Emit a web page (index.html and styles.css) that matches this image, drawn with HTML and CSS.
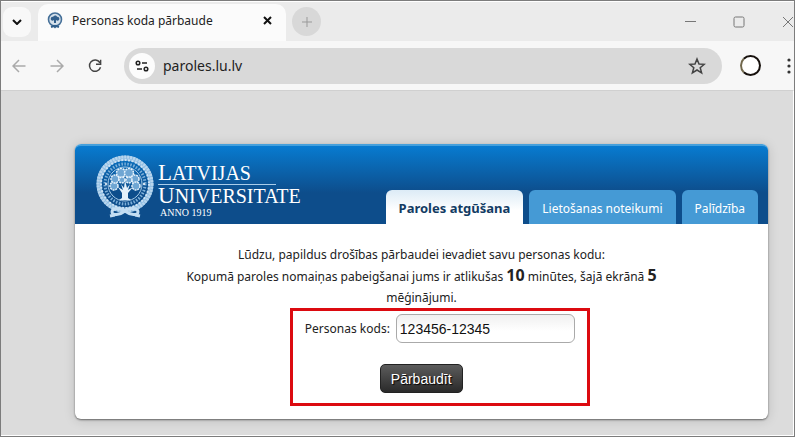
FILE: index.html
```html
<!DOCTYPE html>
<html lang="lv">
  <head>
    <meta charset="UTF-8" />
    <meta name="viewport" content="width=device-width, initial-scale=1.0" />
    <title>Personas koda pārbaude</title>
    <link rel="stylesheet" href="styles.css">
  </head>
  <body>
    <div class="window">
      <!-- Tab strip -->
      <div class="tab-strip">
        <button class="tab-search" aria-label="Tabs">
          <svg width="10" height="6" viewBox="0 0 10 6"><path d="M1 1l4 4 4-4" /></svg>
        </button>
        <div class="browser-tab">
          <svg class="favicon" width="16" height="17" viewBox="0 0 16 17">
            <circle cx="8" cy="7.5" r="6.5" fill="#d5e0ea" stroke="#446f98" stroke-width="1.6" />
            <path d="M4 8c-1-2 1-4 2-3 1-2 4-2 4 0 2-1 3 2 2 3-1 1-2 1-3 0v3H7V8C6 9 5 9 4 8z" fill="#315f8c" />
            <path d="M4 15l3-1 1 1 1-1 3 1" fill="none" stroke="#315f8c" stroke-width="2" />
          </svg>
          <span class="tab-title">Personas koda pārbaude</span>
          <button class="tab-close" aria-label="Close tab">
            <svg width="9" height="9" viewBox="0 0 9 9"><path d="M1 1l7 7M8 1l-7 7" /></svg>
          </button>
        </div>
        <button class="new-tab" aria-label="New tab">
          <svg width="12" height="12" viewBox="0 0 12 12"><path d="M6 1v10M1 6h10" /></svg>
        </button>
        <div class="window-buttons">
          <button aria-label="Minimize"><svg width="12" height="12" viewBox="0 0 12 12"><path d="M1 5.500h11" /></svg></button>
          <button aria-label="Maximize"><svg width="12" height="12" viewBox="0 0 12 12"><rect x="1" y="1" width="10" height="10" rx="1.500" /></svg></button>
          <button aria-label="Close"><svg width="12" height="12" viewBox="0 0 12 12"><path d="M1 1l10 10M11 1L1 11" /></svg></button>
        </div>
      </div>

      <!-- Toolbar -->
      <div class="toolbar">
        <button class="nav-button" aria-label="Back">
          <svg width="14" height="14" viewBox="0 0 14 14"><path d="M13.500 7H1.500M7 1L1 7l6 6" /></svg>
        </button>
        <button class="nav-button" aria-label="Forward">
          <svg width="14" height="14" viewBox="0 0 14 14"><path d="M.5 7h12M7 1l6 6-6 6" /></svg>
        </button>
        <button class="nav-button reload" aria-label="Reload">
          <svg width="14" height="14" viewBox="0 0 14 14"><path d="M11.800 3.600A5.600 5.600 0 1 0 12.500 8.200M12.600.8v4.500H8" /></svg>
        </button>
        <div class="address-bar">
          <button class="site-info" aria-label="Site information">
            <svg width="14" height="12" viewBox="0 0 14 12">
              <circle cx="3" cy="3" r="1.800" /><path d="M7 3h5" />
              <circle cx="11" cy="9" r="1.800" /><path d="M2 9h5" />
            </svg>
          </button>
          <input class="url" type="text" value="paroles.lu.lv" aria-label="Address">
          <button class="star" aria-label="Bookmark">
            <svg width="18" height="18" viewBox="0 0 18 18"><path d="M9 2l2 5 5.300.3-4.100 3.400 1.400 5.200L9 13l-4.600 2.900 1.400-5.200L1.700 7.300 7 7z" /></svg>
          </button>
        </div>
        <button class="profile" aria-label="Profile"></button>
        <button class="menu" aria-label="Menu">
          <svg width="4" height="16" viewBox="0 0 4 16"><circle cx="2" cy="2" r="1.600" /><circle cx="2" cy="8" r="1.600" /><circle cx="2" cy="14" r="1.600" /></svg>
        </button>
      </div>

      <!-- Page -->
      <main class="page">
        <div class="card">
          <header class="header">
            <div class="logo">
              <svg class="emblem" width="60" height="66" viewBox="0 0 60 66">
                <circle cx="30" cy="30" r="26" fill="none" stroke="#8fbde2" stroke-width="5" />
                <circle cx="30" cy="30" r="27" fill="none" stroke="#b9d6ee" stroke-width="3" stroke-dasharray="2 1" />
                <circle cx="30" cy="30" r="24" fill="none" stroke="#cfe3f4" stroke-width="2" stroke-dasharray="2 1.500" />
                <circle cx="30" cy="30" r="20" fill="none" stroke="#7fb0d9" stroke-width="3" stroke-dasharray="1.500 1.500" />
                <circle cx="30" cy="30" r="17" fill="none" stroke="#a9cce8" stroke-width="1" />
                <g fill="#6fa6d3" stroke="#e6f2fb" stroke-width="1.500" stroke-dasharray="2 .8">
                  <circle cx="19" cy="32" r="4" /><circle cx="20" cy="25" r="4" />
                  <circle cx="26" cy="19" r="4.500" /><circle cx="34" cy="19" r="4.500" />
                  <circle cx="40" cy="25" r="4" /><circle cx="41" cy="32" r="4" />
                  <circle cx="27" cy="26" r="3" /><circle cx="34" cy="26" r="3" />
                </g>
                <path d="M23 33l5 3-2-6 3 4 1-8 2 8 3-4-2 6 5-3-5 6v5l3 2H24l3-2v-5z" fill="#e6f2fb" />
                <circle cx="11" cy="30" r="1" fill="#fff" /><circle cx="49" cy="30" r="1" fill="#fff" />
                <g fill="none" stroke="#c3ddf2" stroke-width="3">
                  <path d="M30 57c-5-4-13-3-13 1 0 4 8 3 13-1zM30 57c5-4 13-3 13 1 0 4-8 3-13-1z" />
                  <path d="M20 61l-5 1M40 61l5 1" />
                </g>
              </svg>
              <div class="logo-text">
                <span class="logo-name first">LATVIJAS</span>
                <span class="logo-name">UNIVERSITATE</span>
                <span class="logo-year">ANNO 1919</span>
              </div>
            </div>
            <nav class="tabs">
              <a class="active" href="#">Paroles atgūšana</a>
              <a href="#">Lietošanas noteikumi</a>
              <a href="#">Palīdzība</a>
            </nav>
          </header>

          <div class="content">
            <p>
              Lūdzu, papildus drošības pārbaudei ievadiet savu personas kodu:<br>
              Kopumā paroles nomaiņas pabeigšanai jums ir atlikušas <b>10</b> minūtes, šajā ekrānā <b>5</b>
              mēģinājumi.
            </p>
            <form class="code-form">
              <div class="field">
                <label for="code">Personas kods:</label>
                <input type="text" id="code" value="123456-12345">
              </div>
              <button class="submit" type="submit">Pārbaudīt</button>
            </form>
          </div>
        </div>
      </main>
    </div>
  </body>
</html>
```
FILE: styles.css
```css
* {
  box-sizing: border-box;
}

body {
  margin: 0;
  font-family: "Noto Sans", "Open Sans", sans-serif;
  font-size: 12px;
  color: #222;
  background-color: #dcdcdc;
}

button {
  padding: 0;
  border: none;
  background: none;
  cursor: pointer;
}

svg {
  display: block;
  flex: none;
}

.window {
  display: flex;
  flex-direction: column;
  min-height: 100vh;
  border: 1px solid #7c7c7c;
  overflow: hidden;
}

/* Tab strip */
.tab-strip {
  display: flex;
  align-items: center;
  height: 40px;
  background-color: #ebebeb;
  border-top: 1px solid #fff;
}

.tab-search {
  display: flex;
  align-items: center;
  justify-content: center;
  width: 28px;
  height: 30px;
  margin-left: 2px;
  border-radius: 9px;
  background-color: #f8f8f8;
}

.tab-search svg,
.tab-close svg {
  fill: none;
  stroke: #111;
  stroke-width: 2;
}

.browser-tab {
  display: flex;
  align-items: center;
  width: 248px;
  height: 37px;
  margin-left: 7px;
  padding: 0 14px 4px 9px;
  align-self: flex-end;
  border-radius: 10px 10px 0 0;
  background-color: #fbfbfb;
}

.tab-title {
  flex: 1;
  margin-left: 9px;
  white-space: nowrap;
}

.new-tab {
  display: flex;
  align-items: center;
  justify-content: center;
  width: 29px;
  height: 29px;
  margin-left: 6px;
  border-radius: 50%;
  background-color: #d8d8d8;
}

.new-tab svg {
  stroke: #999;
}

.window-buttons {
  display: flex;
  gap: 37px;
  margin-left: auto;
}

.window-buttons svg {
  fill: none;
  stroke: #777;
}

/* Toolbar */
.toolbar {
  display: flex;
  align-items: center;
  height: 49px;
  padding: 0 3px 0 11px;
  background-color: #f7f7f7;
}

.nav-button {
  margin-right: 24px;
}

.nav-button svg {
  fill: none;
  stroke: #aaa;
  stroke-width: 1.5;
}

.reload {
  margin-right: 22px;
}

.reload svg {
  stroke: #444;
}

.address-bar {
  display: flex;
  align-items: center;
  flex: 1;
  height: 36px;
  padding: 0 16px 0 5px;
  border-radius: 18px;
  background-color: #d9d9d9;
}

.site-info {
  display: flex;
  align-items: center;
  justify-content: center;
  width: 26px;
  height: 26px;
  border-radius: 50%;
  background-color: #fcfcfc;
}

.site-info svg {
  fill: none;
  stroke: #222;
  stroke-width: 1.5;
}

.url {
  flex: 1;
  min-width: 0;
  margin-left: 8px;
  padding: 0;
  border: none;
  background: none;
  font-family: "Noto Sans", sans-serif;
  font-size: 14px;
  color: #222;
}

.star svg {
  fill: none;
  stroke: #444;
  stroke-width: 1.5;
}

.profile {
  width: 21px;
  height: 21px;
  margin: 0 26px 0 18px;
  border: 2px solid #17110d;
  border-left-color: #71684c;
  border-radius: 50%;
  background-color: #fff;
}

.menu svg {
  fill: #333;
}

/* Page */
.page {
  flex: 1;
  padding: 53px 25px 16px 74px;
  border-top: 1px solid #d0d0d0;
  border-right: 1px solid #fff;
  border-bottom: 1px solid #fff;
  background-color: #dcdcdc;
}

.card {
  border-radius: 6px;
  background-color: #fff;
  box-shadow: 0 1px 2px rgba(0, 0, 0, 0.5), 0 1px 12px rgba(0, 0, 0, 0.15);
}

.header {
  display: flex;
  justify-content: space-between;
  height: 80px;
  padding: 0 10px 0 20px;
  border-top: 2px solid #45a0dc;
  border-radius: 6px 6px 0 0;
  background: linear-gradient(#087bd0, #0d4d8b 60%, #0d4d8b);
}

.logo {
  display: flex;
  gap: 3px;
  padding-top: 8px;
}

.logo-text {
  display: flex;
  flex-direction: column;
  align-items: flex-start;
  padding-top: 8px;
  font-family: "Liberation Serif", serif;
  color: #fff;
}

.logo-name {
  display: block;
  font-size: 20px;
  line-height: 21px;
}

.logo-name::first-letter {
  font-size: 23px;
}

.first {
  padding-right: 25px;
  border-bottom: 1px solid #a9cdea;
}

.logo-year {
  margin-left: 2px;
  font-size: 10px;
  line-height: 12px;
}

.tabs {
  display: flex;
  align-items: flex-end;
  gap: 6px;
}

.tabs a {
  height: 34px;
  padding: 0 13px;
  border-radius: 6px 6px 0 0;
  background-color: #459ad5;
  line-height: 37px;
  white-space: nowrap;
  color: #fff;
  text-decoration: none;
}

.tabs .active {
  background: linear-gradient(#dcebf6, #fff 60%);
  font-size: 13px;
  font-weight: bold;
  color: #123b63;
}

.content {
  padding: 20px 0 13px;
}

.content p {
  max-width: 500px;
  margin: 0 auto;
  line-height: 21px;
  text-align: center;
}

.content b {
  font-size: 16px;
}

/* Code form */
.code-form {
  width: 300px;
  margin-left: 31%;
  padding: 3px 12px 10px;
  border: 3px solid #dc0a10;
}

.field {
  display: flex;
  align-items: center;
  justify-content: space-between;
}

.field input {
  width: 179px;
  height: 29px;
  padding: 0 3px;
  border: 1px solid #aaa;
  border-radius: 6px;
  background: linear-gradient(#f0f0f0, #fff 60%);
  font-family: "Liberation Sans", Arial, sans-serif;
  font-size: 14px;
  color: #111;
}

.submit {
  display: block;
  height: 29px;
  margin: 21px 0 0 75px;
  padding: 0 10px;
  border: 1px solid #222;
  border-radius: 5px;
  background: linear-gradient(#5c5c5c, #2a2a2a);
  font-family: "Liberation Sans", Arial, sans-serif;
  font-size: 14px;
  color: #fff;
  text-shadow: 1px 1px 1px #000;
}
```
